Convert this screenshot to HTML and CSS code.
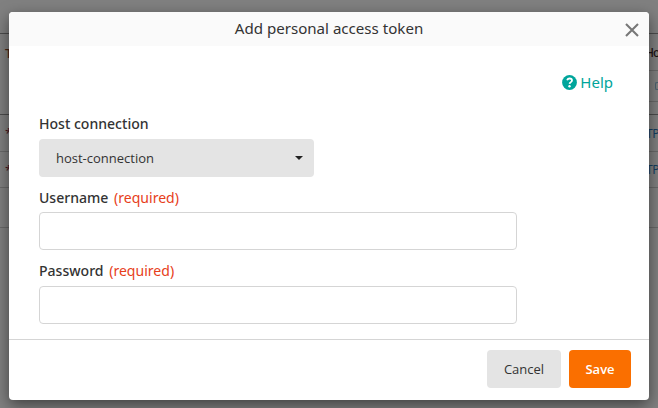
FILE: index.html
```html
<!DOCTYPE html>
<html lang="en">
<head>
<meta charset="utf-8">
<title>Add personal access token</title>
<link rel="stylesheet" href="styles.css">
</head>
<body>
<div class="page">
  <div class="row row-top"></div>
  <div class="row row-head">
    <span class="head-left">T</span>
    <div class="head-right"><div class="head-name">Ho</div><div class="head-filter"><span class="filter-box"></span></div></div>
  </div>
  <div class="row row-first"><span class="star">*</span><span class="link">TP</span></div>
  <div class="row row-second"><span class="star">*</span><span class="link">TP</span></div>
  <div class="row row-last"></div>
</div>
<div class="overlay">
  <section class="modal" role="dialog" aria-labelledby="title">
    <header class="header">
      <h1 class="title" id="title">Add personal access token</h1>
      <button class="close" aria-label="Close"><svg width="14" height="14" viewBox="0 0 14 14"><path d="M1 1L13 13M13 1L1 13" stroke="#777" stroke-width="2.1" fill="none"/></svg></button>
    </header>
    <div class="body">
      <a class="help"><svg width="15" height="15" viewBox="0 0 15 15"><circle cx="7.5" cy="7.5" r="7.4" fill="#00a59b"/><path d="M5.1 5.2C5.6 3.9 6.5 3.5 7.6 3.5C9 3.5 10 4.3 10 5.5C10 7.1 7.8 7.1 7.6 8.8" stroke="#fff" stroke-width="1.8" fill="none"/><circle cx="7.5" cy="11.2" r="1.2" fill="#fff"/></svg><span>Help</span></a>
      <div class="field field-host"><label class="label">Host connection</label><button class="select"><span>host-connection</span><span class="caret"></span></button></div>
      <div class="field field-user"><label class="label" for="user">Username <span class="required">(required)</span></label><input class="input" id="user"></div>
      <div class="field"><label class="label" for="pass">Password <span class="required">(required)</span></label><input class="input" id="pass" type="password"></div>
    </div>
    <footer class="footer"><button class="button cancel">Cancel</button><button class="button save">Save</button></footer>
  </section>
</div>
</body>
</html>
```
FILE: styles.css
```css
* { box-sizing: border-box; }
body { margin: 0; width: 658px; height: 408px; overflow: hidden; font-family: "Noto Sans", "Open Sans", sans-serif; color: #333; background: #808080; }
button { font: inherit; border: 0; padding: 0; }
.page { font-size: 13px; color: #1d1010; }
.row { display: flex; justify-content: space-between; align-items: center; border-bottom: 1px solid #696969; padding-left: 5px; }
.row-top { height: 34px; border-color: #4c4c4c; }
.row-head { height: 81px; align-items: stretch; border-color: #4c4c4c; font-weight: 500; }
.head-left { padding-top: 10px; color: #482313; }
.head-right { width: 12px; font-size: 12px; }
.head-name { height: 37px; line-height: 37px; margin-left: -1px; letter-spacing: -1px; border-bottom: 1px solid #696969; }
.head-filter { height: 31px; padding: 11px 0 0 9px; border-bottom: 1px solid #696969; }
.filter-box { display: block; width: 3px; height: 8px; border: 1px solid #4d6270; border-right: 0; border-radius: 2px 0 0 2px; }
.row-first { height: 37px; }
.row-second { height: 36px; }
.row-last { height: 40px; }
.link { width: 12px; color: #153e60; font-size: 12px; letter-spacing: -.5px; }
.star { color: #471320; }
.overlay { position: absolute; inset: 0; padding: 12px 9px 8px; }
.modal { display: flex; flex-direction: column; height: 388px; overflow: hidden; border-radius: 4px; background: #fff; box-shadow: 0 5px 15px rgba(0, 0, 0, .5); }
.header { display: grid; grid-template-columns: 24px 1fr 24px; align-items: center; height: 34px; padding: 0 5px; background: #fafafa; }
.title { grid-column: 2; margin: 0; text-align: center; font-size: 15.1px; font-weight: 400; line-height: 32px; height: 34px; }
.close { display: flex; align-items: center; justify-content: center; height: 24px; margin-top: 1px; background: none; }
.body { height: 293px; padding: 26px 30px 0; }
.help { display: flex; align-items: center; justify-content: flex-end; gap: 4px; height: 20px; padding-right: 6px; margin-bottom: 22px; color: #00a59b; font-size: 15px; }
.help svg { margin-right: -0.5px; }
.field { display: flex; flex-direction: column; height: 73px; }
.field-host { height: 74px; }
.field-user .label { height: 24px; }
.label { height: 25px; line-height: 20px; font-size: 14.05px; font-weight: 500; }
.required { margin-left: 2px; color: #e7401b; font-weight: 400; }
.select { display: flex; align-items: center; justify-content: space-between; width: 275px; height: 38px; padding: 0 11px 0 17px; border-radius: 4px; background: #e4e4e4; color: #333; font-family: "Open Sans", sans-serif; font-size: 13px; }
.caret { border: 4px solid transparent; border-top-color: #222; border-bottom: 0; }
.input { width: 478px; height: 38px; padding: 0 12px; border: 1px solid #d5d5d5; border-radius: 4px; background: #fff; }
.footer { display: flex; justify-content: flex-end; gap: 8px; height: 61px; padding: 10px 18px; border-top: 1px solid #d5d5d5; }
.button { height: 38px; border-radius: 4px; font-family: "Open Sans", sans-serif; font-size: 13px; }
.cancel { width: 74px; background: #e4e4e4; color: #333; }
.save { width: 62px; background: #fa6f00; color: #fff; font-weight: 600; }
```
